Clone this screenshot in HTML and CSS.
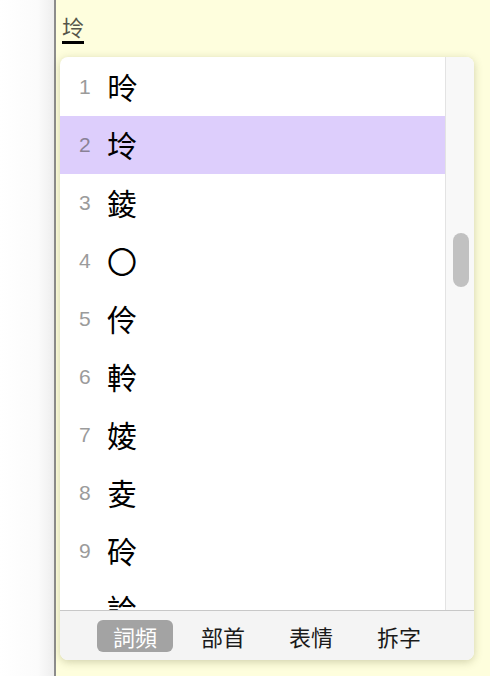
FILE: index.html
```html
<!DOCTYPE html>
<html lang="zh-Hant">
<head>
<meta charset="utf-8">
<link rel="stylesheet" href="styles.css">
</head>
<body>
<div class="page">
  <div class="gutter"></div>
  <div class="divider"></div>
  <div class="editor">
    <div class="compose"><span class="preedit">坽</span></div>
    <div class="popup">
      <div class="body">
        <div class="list">
          <div class="row"><span class="num">1</span><span class="cand">昤</span></div>
          <div class="row sel"><span class="num">2</span><span class="cand">坽</span></div>
          <div class="row"><span class="num">3</span><span class="cand">錂</span></div>
          <div class="row"><span class="num">4</span><span class="cand">〇</span></div>
          <div class="row"><span class="num">5</span><span class="cand">伶</span></div>
          <div class="row"><span class="num">6</span><span class="cand">軨</span></div>
          <div class="row"><span class="num">7</span><span class="cand">婈</span></div>
          <div class="row"><span class="num">8</span><span class="cand">夌</span></div>
          <div class="row"><span class="num">9</span><span class="cand">砱</span></div>
          <div class="row"><span class="num"></span><span class="cand">詅</span></div>
        </div>
        <div class="track"><div class="thumb"></div></div>
      </div>
      <div class="tabs">
        <span class="tab active">詞頻</span>
        <span class="tab">部首</span>
        <span class="tab">表情</span>
        <span class="tab">拆字</span>
      </div>
    </div>
  </div>
</div>
</body>
</html>
```
FILE: styles.css
```css
html, body {
  margin: 0;
  padding: 0;
}
body {
  width: 490px;
  height: 676px;
  overflow: hidden;
  font-family: "Noto Sans CJK TC", "Liberation Sans", sans-serif;
}
.page {
  display: flex;
  height: 676px;
}
.gutter {
  width: 54px;
  background: linear-gradient(to right, #ffffff 0%, #fbfbfb 70%, #eeeeee 100%);
}
.divider {
  width: 2px;
  background: #8c8c8c;
}
.editor {
  flex: 1;
  background: #fefedd;
  display: flex;
  flex-direction: column;
}
.compose {
  height: 57px;
  padding-left: 6px;
  box-sizing: border-box;
  padding-top: 12px;
}
.preedit {
  display: inline-block;
  font-size: 22px;
  line-height: 29px;
  color: #55554a;
  border-bottom: 3px solid #000;
}
.popup {
  margin-left: 4px;
  width: 414px;
  height: 603px;
  border-radius: 8px;
  overflow: hidden;
  background: #ffffff;
  box-shadow: 0 2px 8px rgba(90, 90, 40, 0.28);
  display: flex;
  flex-direction: column;
}
.body {
  display: flex;
  height: 553px;
  overflow: hidden;
}
.list {
  flex: 1;
  padding-top: 1px;
}
.row {
  height: 58px;
  display: flex;
  align-items: center;
  padding-left: 19px;
}
.row.sel {
  background: #ddcefc;
}
.num {
  width: 28px;
  font-family: "Liberation Sans", sans-serif;
  font-size: 21px;
  color: #9b9b9b;
}
.row.sel .num {
  color: #8a8296;
}
.cand {
  font-size: 30px;
  line-height: 40px;
  color: #000;
  margin-top: -3px;
}
.track {
  width: 29px;
  border-left: 1px solid #e3e3e3;
  background: #f8f8f8;
  padding-left: 7px;
  padding-top: 176px;
  box-sizing: border-box;
}
.thumb {
  width: 16px;
  height: 54px;
  border-radius: 8px;
  background: #c1c1c1;
}
.tabs {
  flex: 1;
  border-top: 1px solid #c8c8c8;
  background: #f4f4f4;
  display: flex;
  align-items: center;
  gap: 12px;
  padding-left: 37px;
}
.tab {
  width: 76px;
  height: 32px;
  border-radius: 6px;
  display: flex;
  align-items: center;
  justify-content: center;
  font-size: 22px;
  color: #1a1a1a;
}
.tab.active {
  background: #a3a3a3;
  color: #ffffff;
}
```
